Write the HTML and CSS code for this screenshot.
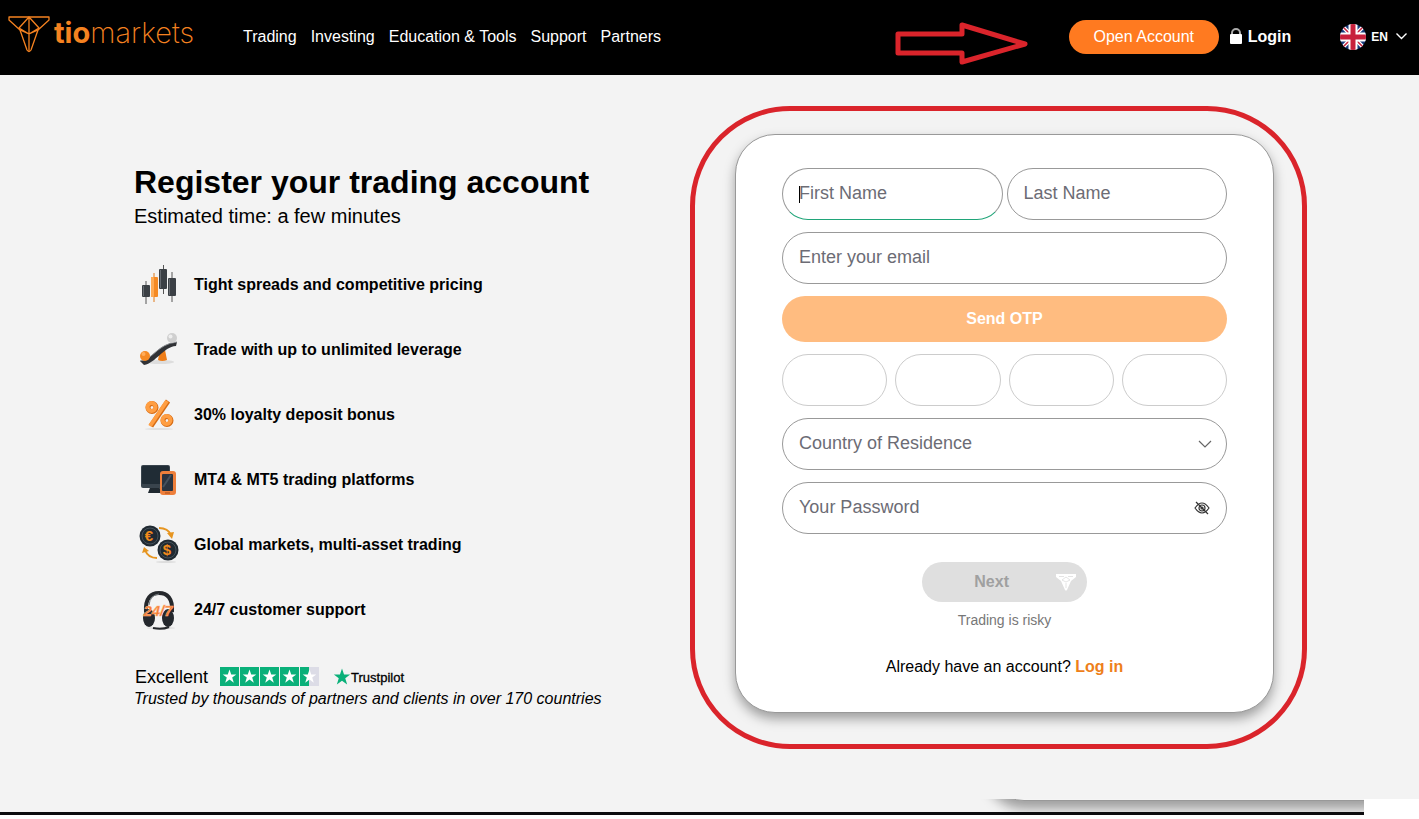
FILE: index.html
```html
<!DOCTYPE html>
<html lang="en">
<head>
  <meta charset="UTF-8">
  <meta name="viewport" content="width=device-width, initial-scale=1.0">
  <title>Register your trading account</title>
  <link rel="stylesheet" href="styles.css">
</head>
<body>
  <header class="header">
    <a href="#" class="logo">
      <svg width="42" height="37" viewBox="0 0 42 37" fill="none" stroke="#f58220" stroke-width="1.3" stroke-linejoin="round">
        <path d="M1 1H41V4L30 14L23 34Q21 37 19 34L12 14L1 4Z"/>
        <path d="M21 1L11 12L21 18L31 12L21 1V18V35M12 14L21 18L30 14"/>
      </svg>
      <span class="logo-text"><b>tio</b>markets</span>
    </a>
    <nav class="nav">
      <a href="#">Trading</a>
      <a href="#">Investing</a>
      <a href="#">Education &amp; Tools</a>
      <a href="#">Support</a>
      <a href="#">Partners</a>
    </nav>
    <svg class="arrow" width="134" height="44" viewBox="0 0 134 44" fill="none" stroke="#da242b" stroke-width="5" stroke-linejoin="round">
      <path d="M4 13H68V4L131 23L68 41V32H4Z"/>
    </svg>
    <div class="header-actions">
      <button type="button" class="open-account">Open Account</button>
      <a href="#" class="login">
        <svg width="12" height="18" viewBox="0 0 12 18">
          <path d="M2 8V5a4 4 0 0 1 8 0v3" fill="none" stroke="#aaa" stroke-width="2"/>
          <rect y="6" width="12" height="10" rx="1" fill="#fff"/>
        </svg>
        Login
      </a>
      <button type="button" class="language">
        <svg width="26" height="26" viewBox="0 0 26 26">
          <defs><clipPath id="flag"><circle cx="13" cy="13" r="13"/></clipPath></defs>
          <g clip-path="url(#flag)">
            <rect width="26" height="26" fill="#173a7c"/>
            <path d="M0 0L26 26M26 0L0 26" stroke="#fff" stroke-width="4"/>
            <path d="M0 0L26 26M26 0L0 26" stroke="#c8203c" stroke-width="1.500"/>
            <path d="M13 0V26M0 13H26" stroke="#fff" stroke-width="9"/>
            <path d="M13 0V26M0 13H26" stroke="#c8203c" stroke-width="5"/>
          </g>
        </svg>
        <span>EN</span>
        <svg class="language-chevron" width="11" height="7" viewBox="0 0 11 7" fill="none" stroke="#fff" stroke-width="1.4"><path d="M.5 .5L5.500 5.500L10.500 .5"/></svg>
      </button>
    </div>
  </header>

  <main class="main">
    <section class="intro">
      <h1>Register your trading account</h1>
      <p class="subtitle">Estimated time: a few minutes</p>

      <ul class="features">
        <li>
          <svg width="40" height="40" viewBox="0 0 40 40">
            <path d="M7 16V39" stroke="#555" stroke-width="1"/>
            <path d="M15 8V37" stroke="#e07a1a" stroke-width="1"/>
            <path d="M24.500 0V29M33 7V37" stroke="#555" stroke-width="1"/>
            <rect x="3" y="20" width="8" height="12" rx="1" fill="#3b4045"/>
            <rect x="12" y="12" width="7" height="20" rx="1" fill="#f58a24"/>
            <rect x="12" y="12" width="3" height="20" rx="1" fill="#ffab55"/>
            <rect x="20" y="4" width="8" height="20" rx="1" fill="#3b4045"/>
            <rect x="29" y="13" width="8" height="18" rx="1" fill="#3b4045"/>
            <path d="M4.500 21V31M21.500 5V23M30.500 14V30" stroke="#666b70"/>
          </svg>
          Tight spreads and competitive pricing
        </li>
        <li>
          <svg width="40" height="40" viewBox="0 0 40 40">
            <ellipse cx="21" cy="32" rx="14" ry="2" fill="#ddd"/>
            <path d="M21 20H26L28 30Q23 32 19 30Z" fill="#ee7d18"/>
            <path d="M1 31C14 30 18 14 38 12L37 16C24 17 17 33 5 35Z" fill="#303236"/>
            <path d="M1 31C14 30 18 14 38 12" stroke="#85888c" fill="none"/>
            <circle cx="6" cy="26" r="5" fill="#f58a24"/>
            <circle cx="4.500" cy="24" r="2" fill="#ffad5c"/>
            <circle cx="33" cy="8" r="5" fill="#cfcfcf"/>
            <circle cx="31.500" cy="6.500" r="2" fill="#eee"/>
          </svg>
          Trade with up to unlimited leverage
        </li>
        <li>
          <svg width="40" height="40" viewBox="0 0 40 40" fill="none">
            <ellipse cx="20" cy="34" rx="14" ry="1" fill="#e0e0e0"/>
            <g stroke="#d66b13" stroke-width="5">
              <circle cx="13" cy="12.500" r="4"/><circle cx="28" cy="25.500" r="4"/><path d="M29 6L12 31"/>
            </g>
            <g stroke="#ff9e42" stroke-width="4">
              <circle cx="12.500" cy="12" r="4"/><circle cx="27.500" cy="25" r="4"/><path d="M28 6L11 31"/>
            </g>
          </svg>
          30% loyalty deposit bonus
        </li>
        <li>
          <svg width="40" height="40" viewBox="0 0 40 40">
            <path d="M12 25H20L22 33H9Z" fill="#202930"/>
            <rect x="2" y="5" width="29" height="23" rx="2" fill="#39444d"/>
            <rect x="3" y="6" width="27" height="18" rx="1" fill="#202c35"/>
            <rect x="21" y="11" width="16" height="24" rx="3" fill="#ee7f3b"/>
            <rect x="23" y="14" width="11" height="17" rx="1" fill="#2b3440"/>
            <path d="M26 33H31" stroke="#a94f1b"/>
            <path d="M24 27L32 15" stroke="#46515d" stroke-width="2"/>
          </svg>
          MT4 &amp; MT5 trading platforms
        </li>
        <li>
          <svg width="40" height="40" viewBox="0 0 40 40">
            <ellipse cx="27" cy="37" rx="10" ry="1" fill="#ddd"/>
            <circle cx="11" cy="11" r="10.500" fill="#202a32"/>
            <circle cx="11" cy="11" r="8" fill="none" stroke="#45515a"/>
            <circle cx="29" cy="25" r="10.500" fill="#202a32"/>
            <circle cx="29" cy="25" r="8" fill="none" stroke="#45515a"/>
            <path d="M20 3Q29 3 32 10M18 33Q9 33 6 25" fill="none" stroke="#e69520" stroke-width="2"/>
            <path d="M28 8L33 14L35 7ZM3 28L5 22L10 26Z" fill="#e69520"/>
            <text class="coin" x="10" y="16">€</text>
            <text class="coin" x="28" y="30">$</text>
          </svg>
          Global markets, multi-asset trading
        </li>
        <li>
          <svg width="40" height="40" viewBox="0 0 40 40">
            <ellipse cx="22" cy="38" rx="14" ry="1" fill="#ddd"/>
            <path d="M7 22C6 8 12 3 20 3S34 8 33 22" fill="none" stroke="#25282c" stroke-width="4"/>
            <path d="M10 15Q11 5 20 4" fill="none" stroke="#72777c"/>
            <ellipse cx="10" cy="28" rx="6" ry="9" fill="#24282d"/>
            <ellipse cx="29" cy="28" rx="6" ry="9" fill="#24282d"/>
            <path d="M30 37Q23 40 14 38" fill="none" stroke="#25282c" stroke-width="2"/>
            <text class="hours" x="19" y="26">24/7</text>
          </svg>
          24/7 customer support
        </li>
      </ul>

      <div class="rating">
        <span>Excellent</span>
        <svg class="stars" width="99" height="19" viewBox="0 0 99 19">
          <defs><path id="star" d="M9.500 2.500L11.200 7.500H16.300L12.200 10.600L13.800 15.800L9.500 12.600L5.200 15.800L6.800 10.600L2.700 7.500H7.800Z"/></defs>
          <path d="M0 0h19v19H0zM20 0h19v19H20zM40 0h19v19H40zM60 0h19v19H60zM80 0h9v19H80z" fill="#0ab079"/>
          <rect x="89" width="10" height="19" fill="#dcdce6"/>
          <g fill="#fff">
            <use href="#star"/><use href="#star" x="20"/><use href="#star" x="40"/><use href="#star" x="60"/><use href="#star" x="80"/>
          </g>
        </svg>
        <svg width="18" height="18" viewBox="2 2 15 15"><use href="#star" fill="#0ab079"/></svg>
        <span class="trustpilot">Trustpilot</span>
      </div>
      <p class="trusted">Trusted by thousands of partners and clients in over 170 countries</p>
    </section>

    <form class="card">
      <div class="highlight"></div>
      <div class="names">
        <div class="field">
          <input type="text" class="active" placeholder="First Name" aria-label="First Name">
          <span class="cursor"></span>
        </div>
        <input type="text" placeholder="Last Name" aria-label="Last Name">
      </div>
      <input type="email" placeholder="Enter your email" aria-label="Enter your email">
      <button type="button" class="send-otp">Send OTP</button>
      <div class="otp">
        <input type="text" maxlength="1" aria-label="Digit 1">
        <input type="text" maxlength="1" aria-label="Digit 2">
        <input type="text" maxlength="1" aria-label="Digit 3">
        <input type="text" maxlength="1" aria-label="Digit 4">
      </div>
      <div class="field">
        <select aria-label="Country of Residence">
          <option>Country of Residence</option>
        </select>
        <svg class="field-icon chevron" width="14" height="8" viewBox="0 0 14 8" fill="none" stroke="#666" stroke-width="1.200"><path d="M1 1L7 7L13 1"/></svg>
      </div>
      <div class="field">
        <input type="password" placeholder="Your Password" aria-label="Your Password">
        <button type="button" class="field-icon eye" aria-label="Show password">
          <svg width="16" height="14" viewBox="0 0 16 14" fill="none" stroke="#333" stroke-width="1.200">
            <path d="M1 7Q8 -3 15 7Q8 17 1 7Z"/>
            <circle cx="8" cy="7" r="3"/>
            <circle cx="8" cy="7" r="1"/>
            <path d="M2 1L14 13"/>
          </svg>
        </button>
      </div>
      <button type="submit" class="next" disabled>
        <span>Next</span>
        <svg width="20" height="17" viewBox="0 0 20 17">
          <path d="M0 0H20V3L15 7L11 16Q10 17 9 16L5 7L0 3Z" fill="#fff"/>
          <path d="M3 2.500H8M12 2.500H17M6 6L10 3L14 6L10 8ZM10 9V14" fill="none" stroke="#ddd" stroke-width=".8"/>
        </svg>
      </button>
      <p class="risk">Trading is risky</p>
      <p class="have-account">Already have an account? <a href="#">Log in</a></p>
    </form>
  </main>

  <div class="bottom-strip">
    <div class="bottom-card"></div>
  </div>
</body>
</html>
```

FILE: styles.css
```css
* {
  box-sizing: border-box;
}

body {
  margin: 0;
  background-color: white;
  color: #000;
  font-family: "Liberation Sans", Arial, sans-serif;
  font-size: 16px;
}

h1,
p,
ul {
  margin: 0;
  padding: 0;
}

a {
  color: inherit;
  text-decoration: none;
}

button,
input,
select {
  font-family: inherit;
}

button {
  border: none;
  padding: 0;
  cursor: pointer;
}

svg {
  flex-shrink: 0;
}

/* header */
.header {
  position: relative;
  display: flex;
  align-items: center;
  height: 75px;
  padding: 0 12px 2px 8px;
  background-color: #000;
  color: #fff;
}

.logo {
  display: flex;
  align-items: center;
  gap: 4px;
  width: 235px;
  padding-bottom: 4px;
}

.logo-text {
  padding-bottom: 4px;
  font-family: Inter, sans-serif;
  font-size: 29px;
  font-weight: 200;
  line-height: 32px;
  color: #f58220;
}

.logo-text b {
  font-weight: 700;
}

.nav {
  display: flex;
  gap: 14px;
}

.arrow {
  position: absolute;
  top: 21px;
  right: 391px;
}

.header-actions {
  display: flex;
  align-items: center;
  margin-left: auto;
}

.open-account {
  width: 150px;
  height: 34px;
  border-radius: 17px;
  background-color: #ff7a20;
  color: #fff;
  font-size: 16px;
}

.login {
  display: flex;
  align-items: center;
  gap: 6px;
  margin-left: 11px;
  font-weight: bold;
}

.language {
  display: flex;
  align-items: center;
  gap: 5px;
  margin-left: 49px;
  background: none;
  color: #fff;
  font-size: 12px;
  font-weight: bold;
}

.language-chevron {
  margin-left: 3px;
}

/* main */
.main {
  display: grid;
  grid-template-columns: 601fr 539fr;
  align-items: start;
  padding: 59px 145px 86px 134px;
  background-color: #f3f3f3;
}

.intro {
  padding-top: 29px;
}

h1 {
  font-size: 32px;
  line-height: 38px;
}

.subtitle {
  font-size: 20px;
  line-height: 30px;
}

.features {
  display: grid;
  gap: 25px;
  padding: 34px 0 0 5px;
  list-style: none;
}

.features li {
  display: flex;
  align-items: center;
  gap: 15px;
  font-weight: bold;
}

.coin {
  fill: #f08a1c;
  font-size: 15px;
  font-weight: bold;
  text-anchor: middle;
}

.hours {
  fill: #f57a30;
  stroke: #ffb98a;
  stroke-width: 0.5px;
  font-size: 15px;
  font-style: italic;
  font-weight: bold;
  text-anchor: middle;
}

.rating {
  display: flex;
  align-items: center;
  padding: 34px 0 0 1px;
  font-size: 18px;
  line-height: 22px;
}

.stars {
  margin: 0 14px 0 12px;
}

.trustpilot {
  padding-top: 3px;
  font-size: 13px;
  -webkit-text-stroke: 0.3px #000;
}

.trusted {
  font-style: italic;
  line-height: 20px;
}

/* form */
.card {
  position: relative;
  display: flex;
  flex-direction: column;
  gap: 12px;
  padding: 33px 46px 34px;
  border: 1px solid #999;
  border-radius: 40px;
  background-color: white;
  box-shadow: 0 6px 12px rgba(0, 0, 0, 0.35);
}

/* red ring around the card */
.highlight {
  position: absolute;
  inset: -29px -34px -37px -46px;
  border: 5px solid #da242b;
  border-radius: 100px;
  pointer-events: none;
}

.names {
  display: grid;
  grid-template-columns: 1fr 1fr;
  gap: 4px;
}

.field {
  position: relative;
}

.card input,
.card select {
  display: block;
  width: 100%;
  height: 52px;
  padding: 0 16px 2px;
  border: 1px solid #999;
  border-radius: 26px;
  background-color: white;
  color: #6c6c75;
  font-size: 18px;
  outline: none;
  appearance: none;
}

.card input::placeholder {
  color: #6c6c75;
  opacity: 1;
}

.card input.active {
  border-bottom-color: #20a579;
}

.cursor {
  position: absolute;
  top: 18px;
  left: 17px;
  width: 1px;
  height: 17px;
  background-color: #000;
}

.send-otp {
  height: 46px;
  border-radius: 23px;
  background-color: #ffbc80;
  color: #fff;
  font-size: 16px;
  font-weight: bold;
}

.otp {
  display: grid;
  grid-template-columns: repeat(4, 1fr);
  gap: 8px;
}

.card .otp input {
  border-color: #ccc;
}

.field-icon {
  position: absolute;
  right: 15px;
}

.chevron {
  top: 22px;
}

.eye {
  top: 19px;
  right: 17px;
  display: flex;
  background: none;
}

.next {
  display: flex;
  align-items: center;
  justify-content: flex-end;
  gap: 47px;
  align-self: center;
  width: 165px;
  height: 40px;
  margin-top: 16px;
  padding-right: 11px;
  border-radius: 20px;
  background-color: #dfdfdf;
  color: #a0a0a0;
  font-size: 16px;
  font-weight: bold;
}

.risk {
  margin-top: -4px;
  color: #777;
  font-size: 14px;
  line-height: 20px;
  text-align: center;
}

.have-account {
  margin-top: 14px;
  line-height: 22px;
  text-align: center;
}

.have-account a {
  color: #ee7f1a;
  font-weight: bold;
}

/* top of the next section */
.bottom-strip {
  display: flex;
  justify-content: flex-end;
  height: 16px;
  margin-right: 55px;
  border-bottom: 3px solid #0c0c0e;
  background-color: #f3f3f3;
  overflow: hidden;
}

.bottom-card {
  width: 420px;
  height: 80px;
  margin: -78px -40px 0 0;
  border: 1px solid #999;
  border-radius: 40px;
  background-color: #f5f5f5;
  box-shadow: 0 8px 12px rgba(0, 0, 0, 0.35);
}
```
